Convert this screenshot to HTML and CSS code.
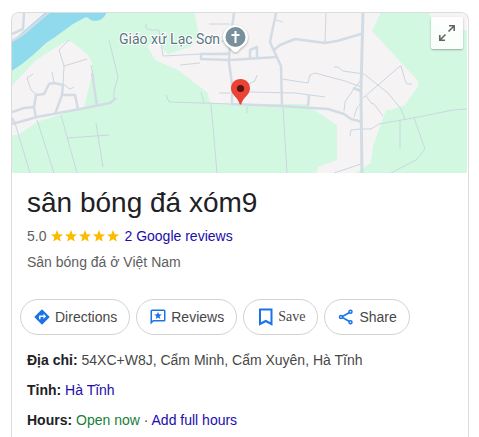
FILE: index.html
```html
<!DOCTYPE html>
<html lang="vi">
<head>
    <meta charset="UTF-8">
    <meta name="viewport" content="width=device-width, initial-scale=1.0">
    <title>sân bóng đá xóm9</title>
    <link rel="stylesheet" href="styles.css">
</head>
<body>
    <main class="card">
        <div class="map">
            <svg class="map-picture" viewBox="12 13 455 160" preserveAspectRatio="xMidYMid slice" role="img" aria-label="Giáo xứ Lạc Sơn">
                <rect class="field" x="10" y="10" width="460" height="166"/>
                <!-- built-up land -->
                <path class="land" d="M10 10H52L12 43H10z"/>
                <path class="land" d="M67 41L72 42L87 54L92 62V75L84 107L37 122L18 135H10V88L35 61L50 51z"/>
                <path class="land" d="M194 10L199 36L190 47L168 54L162 48L159 40L147 46L155 60L178 70L208 93L209 101L214 104L307 104L313 109L337 125V160L318 167L316 176H350L371 163L373 146L386 110L391 110L405 105L418 86V81L372 31L382 10z"/>
                <path class="land" d="M427 10H470V30H440z"/>
                <!-- river -->
                <path class="water" d="M48 10H107C106 17 101 21 95 21C90 21 88 17 86 17L73 24L55 37L46 43L33 55L22 64L10 72V43z"/>
                <!-- small lanes -->
                <g class="lane">
                    <path d="M69 40L59 50L64 66L87 59M64 66L63 84L70 89L74 87M33 74L27 78L31 90L36 94M52 72L54 83"/>
                    <path d="M109 40L118 77L114 91V99L117 98M91 65L94 80M96 123L103 167M67 138L109 135"/>
                    <path d="M15 123L30 173M37 120L54 173M61 115L77 173"/>
                    <path d="M146 24V28L150 30H159L163 56L202 54L230 53M180 65L200 63M209 24H230M219 93H230M221 41H229"/>
                    <path d="M166 95L169 102L232 104M201 92L204 103M211 104L217 173M247 106V113M283 107L287 173"/>
                    <path d="M250 92L295 93L325 97M249 84L255 81L257 75M276 20L283 22M326 13L325 42"/>
                    <path d="M282 79L308 83L310 75L315 73L345 81L361 87M334 67L338 67L343 71L364 74L388 93L401 109L405 119"/>
                    <path d="M363 98L399 67L401 66L405 80L407 84H412M361 80L353 90L345 102L344 111M361 103L357 108L354 117"/>
                    <path d="M366 96L371 103L374 104L383 116M350 136L351 130L360 129H371L379 124L413 118L453 110L467 109"/>
                    <path d="M400 121V148M414 118L425 149L416 160L391 173M334 173L361 164"/>
                </g>
                <!-- wider streets -->
                <g class="street">
                    <path d="M24 13L23 29L12 34M12 41L22 35L49 12M12 112L24 108L34 107M12 124L37 117L80 109L110 103L115 99M92 73L97 106"/>
                    <path d="M36 118L34 107L36 95L44 94L49 84L54 83L63 85L62 95L55 114M62 95H75L78 109M12 118L15 124"/>
                    <path d="M234 13L230 42L229 62L232 84V104L282 106L328 109L344 114L351 119L362 122"/>
                    <path d="M230 60L277 57M201 53V59L229 60M201 54H230M250 58V50L257 47V57"/>
                    <path d="M276 13L270 42L274 51L281 66L282 106M274 50L280 45L295 39L325 43L337 41L361 34M353 88L361 91M309 95L308 106"/>
                </g>
                <path class="avenue" d="M363 10L361 92L362 176"/>
                <!-- church label and marker -->
                <text class="place" x="119" y="44">Giáo xứ Lạc Sơn</text>
                <path class="church-edge" d="M235 25C228 25 223 31 223 37C223 45 230 47 232 50C234 53 237 53 239 50C241 47 248 45 248 37C248 31 242 25 235 25z"/>
                <circle class="church" cx="235.500" cy="37" r="10"/>
                <path class="cross" d="M235.500 31V43M231.500 35H239.500"/>
                <!-- selected place -->
                <path class="pin" d="M240.500 79C235 79 231 83 231 88.500C231 95 238 97 239.800 104.500H241.200C243 97 250 95 250 88.500C250 83 246 79 240.500 79z"/>
                <circle class="pin-dot" cx="240.500" cy="88.500" r="3.600"/>
            </svg>
            <button type="button" class="expand" aria-label="Expand map">
                <svg width="20" height="20" viewBox="0 0 20 20">
                    <path d="M11.500 8.500L17 3M12 2.800H17.200V8M8.500 11.500L3 17M2.800 12V17.200H8"/>
                </svg>
            </button>
        </div>

        <header class="summary">
            <h1>sân bóng đá xóm9</h1>
            <div class="rating">
                <span>5.0</span>
                <svg class="stars" width="70" height="14" viewBox="0 0 70 14" role="img" aria-label="5.0">
                    <defs>
                        <path id="star" d="M7 1L8.700 5.200L13 5.500L9.700 8.300L10.700 12.600L7 10.300L3.300 12.600L4.300 8.300L1 5.500L5.300 5.200z"/>
                    </defs>
                    <use href="#star"/>
                    <use href="#star" x="14"/>
                    <use href="#star" x="28"/>
                    <use href="#star" x="42"/>
                    <use href="#star" x="56"/>
                </svg>
                <a href="#reviews">2 Google reviews</a>
            </div>
            <p class="category">Sân bóng đá ở Việt Nam</p>
        </header>

        <div class="actions">
            <button type="button" class="action">
                <svg width="18" height="18" viewBox="0 0 24 24">
                    <path class="solid" d="M21.700 11.300l-9-9a1 1 0 0 0-1.400 0l-9 9a1 1 0 0 0 0 1.400l9 9a1 1 0 0 0 1.400 0l9-9a1 1 0 0 0 0-1.400zM14 14.500V12h-4v3H8v-4a1 1 0 0 1 1-1h5V7.500l3.500 3.500z"/>
                </svg>
                Directions
            </button>
            <button type="button" class="action">
                <svg width="18" height="18" viewBox="0 0 24 24">
                    <path class="solid" d="M20 2H4a2 2 0 0 0-2 2v18l4-4h14a2 2 0 0 0 2-2V4a2 2 0 0 0-2-2zm0 14H5.200L4 17.200V4h16z"/>
                    <path class="solid" d="M12 5l1.300 3.400 3.700.2-2.900 2.300 1 3.600-3.100-2-3.100 2 1-3.600L7 8.600l3.700-.2z"/>
                </svg>
                Reviews
            </button>
            <button type="button" class="action save">
                <svg width="20" height="20" viewBox="0 0 20 20">
                    <path class="line" d="M4 2.500H15.500V17L9.750 14L4 17z"/>
                </svg>
                <span>Save</span>
            </button>
            <button type="button" class="action">
                <svg width="18" height="18" viewBox="0 0 18 18">
                    <path class="line thin" d="M12.500 4.500L4.500 9L12.500 13.500"/>
                    <circle class="line thin knot" cx="13.500" cy="3.800" r="1.500"/>
                    <circle class="line thin knot" cx="4" cy="9" r="1.500"/>
                    <circle class="line thin knot" cx="13.500" cy="14.200" r="1.500"/>
                </svg>
                Share
            </button>
        </div>

        <div class="details">
            <p><b>Địa chỉ:</b> 54XC+W8J, Cẩm Minh, Cẩm Xuyên, Hà Tĩnh</p>
            <p><b>Tỉnh:</b> <a href="#province">Hà Tĩnh</a></p>
            <p><b>Hours:</b> <span class="open">Open now</span> · <a href="#hours">Add full hours</a></p>
        </div>
    </main>
</body>
</html>
```
FILE: styles.css
```css
* {
    box-sizing: border-box;
}
body {
    margin: 0;
    padding: 12px 10px 0 11px;
    background: #fff;
    font-family: "Liberation Sans", Arial, sans-serif;
    font-size: 14px;
    line-height: 20px;
    color: #474747;
}
h1, p {
    margin: 0;
}
a {
    color: #1a0dab;
    text-decoration: none;
}
a:hover {
    text-decoration: underline;
}
.card {
    border: 1px solid #dadce0;
    border-bottom: none;
    border-radius: 8px 8px 0 0;
    overflow: hidden;
}

/* map */
.map {
    position: relative;
    height: 160px;
    padding-right: 1px;
}
.map-picture {
    display: block;
    width: 100%;
    height: 100%;
}
.field {
    fill: #d3f8e2;
}
.land {
    fill: #f5f3f4;
}
.water {
    fill: #90daee;
}
.lane, .street, .avenue {
    fill: none;
    stroke: #cbd6e0;
    stroke-linejoin: round;
}
.lane {
    stroke-width: 1;
}
.street {
    stroke: #d3dce4;
    stroke-width: 2.5;
}
.avenue {
    stroke: #d3dce4;
    stroke-width: 3;
}
.place {
    font-family: Roboto, sans-serif;
    font-size: 14px;
    fill: #5b7582;
    stroke: #fff;
    stroke-width: 2;
    paint-order: stroke;
}
.church-edge {
    fill: #fff;
    filter: drop-shadow(0 1px 1px rgba(0, 0, 0, 0.3));
}
.church {
    fill: #78909c;
}
.cross {
    fill: none;
    stroke: #fff;
    stroke-width: 2;
}
.pin {
    fill: #ea4335;
}
.pin-dot {
    fill: #5a1212;
}
.expand {
    position: absolute;
    top: 4px;
    right: 5px;
    display: flex;
    align-items: center;
    justify-content: center;
    width: 32px;
    height: 32px;
    padding: 0;
    border: none;
    border-radius: 2px;
    background: rgba(255, 255, 255, 0.9);
    box-shadow: 0 1px 2px rgba(0, 0, 0, 0.3);
    cursor: pointer;
}
.expand path {
    fill: none;
    stroke: #666;
    stroke-width: 1.6;
}

/* name and rating */
.summary {
    padding: 12px 15px 0;
}
h1 {
    font-size: 28px;
    font-weight: 400;
    line-height: 36px;
    color: #202124;
}
.rating {
    display: flex;
    align-items: center;
    margin-top: 5px;
    color: #5e5e5e;
}
.stars {
    margin: 0 4px;
    fill: #fbbc04;
}
.category {
    margin-top: 6px;
    color: #5e5e5e;
}

/* buttons */
.actions {
    display: flex;
    gap: 6px;
    padding: 27px 8px 0;
}
.action {
    display: flex;
    align-items: center;
    gap: 4px;
    height: 36px;
    padding: 0 12px;
    border: 1px solid #d2d2d2;
    border-radius: 18px;
    background: #fff;
    font: inherit;
    color: #474747;
    cursor: pointer;
}
.action:hover {
    background: #f8f9fa;
}
.action svg {
    flex: none;
}
.save {
    gap: 2px;
    font-family: "Liberation Serif", "Times New Roman", serif;
}
.solid {
    fill: #1a73e8;
}
.line {
    fill: none;
    stroke: #1a73e8;
    stroke-width: 2;
}
.thin {
    stroke-width: 1.5;
}
.knot {
    fill: #fff;
}

/* address, province, hours */
.details {
    display: flex;
    flex-direction: column;
    gap: 10px;
    padding: 15px 15px 7px;
}
.details b {
    color: #202124;
}
.open {
    color: #188038;
}
```
